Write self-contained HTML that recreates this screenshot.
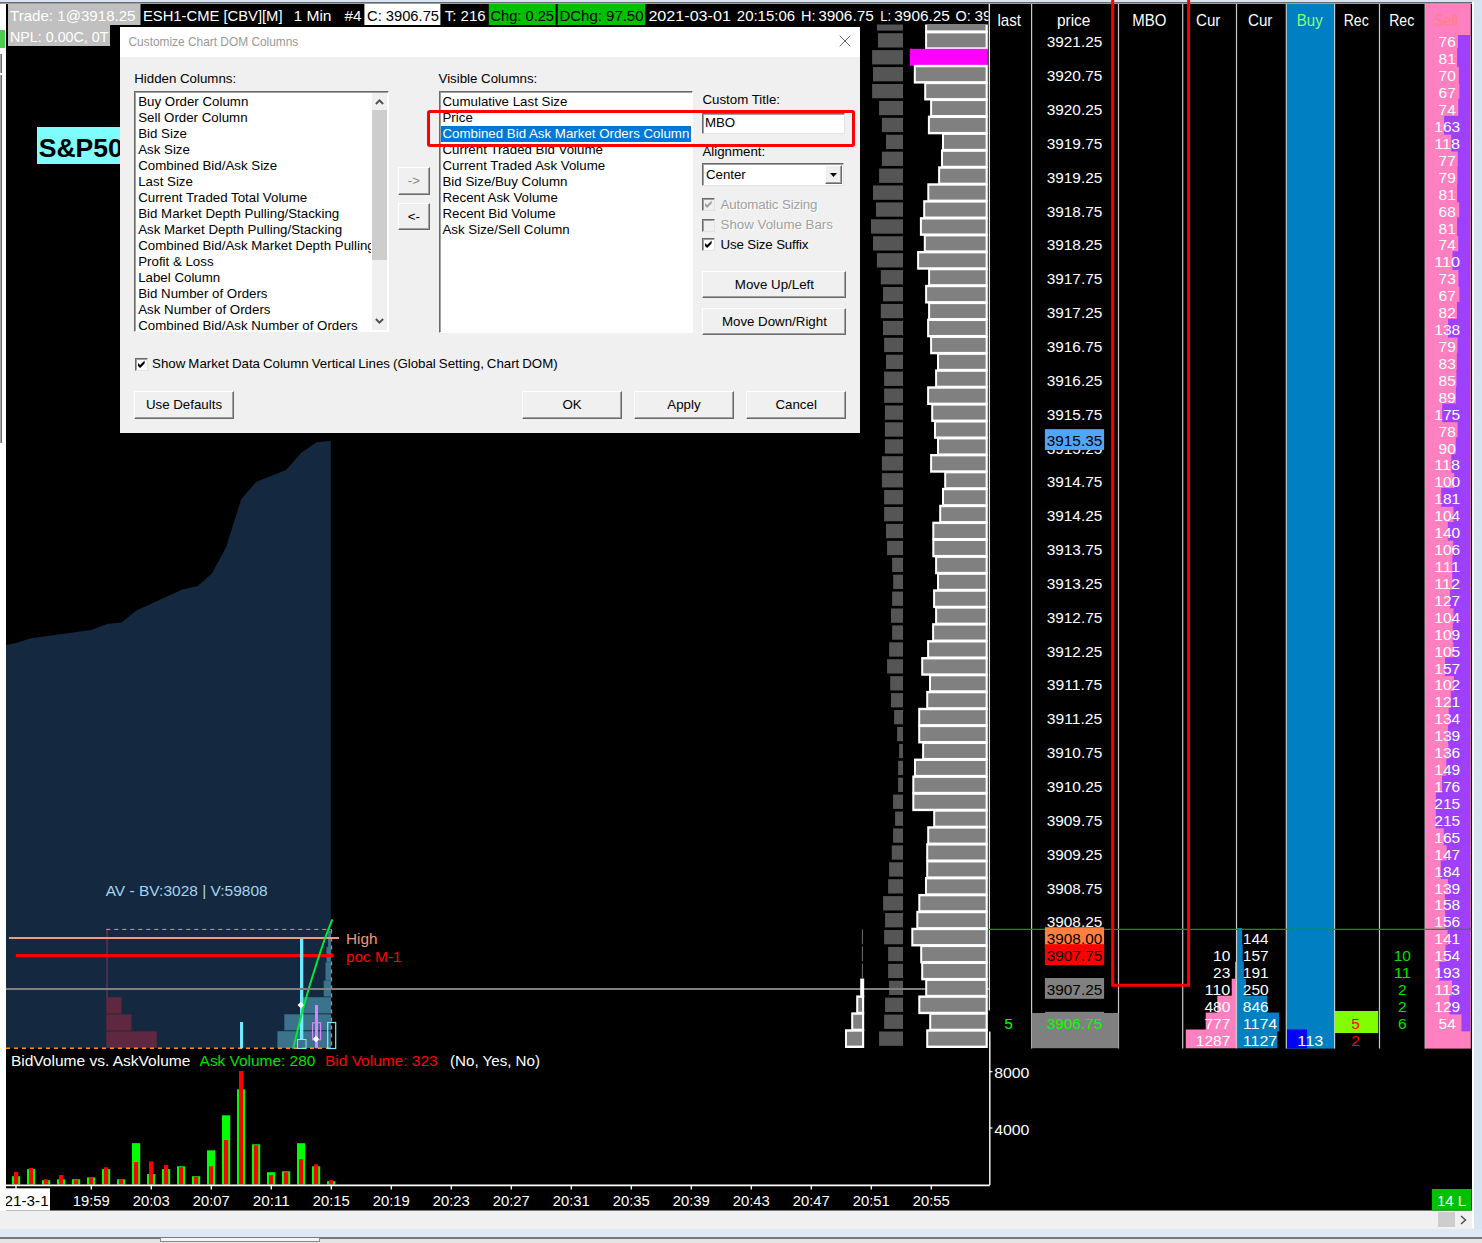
<!DOCTYPE html>
<html><head><meta charset="utf-8"><title>Customize Chart DOM Columns</title><style>
html,body{margin:0;padding:0;}
body{width:1482px;height:1243px;position:relative;overflow:hidden;background:#f0f0f0;font-family:"Liberation Sans",sans-serif;}
#chart{position:absolute;left:0;top:0;}
.abs{position:absolute;}
#dlg{position:absolute;left:120px;top:27px;width:740px;height:406px;background:#f0f0f0;font-size:13.3px;color:#000;overflow:hidden;}
#dlg .tb{position:absolute;left:0;top:0;width:740px;height:30px;background:#fff;}
#dlg .tt{position:absolute;left:8.5px;top:8px;font-size:11.9px;color:#999;white-space:nowrap;}
#dlg .lbl{position:absolute;white-space:nowrap;line-height:16px;}
.lb{position:absolute;background:#fff;border:1px solid #fff;border-top-color:#696969;border-left-color:#696969;box-shadow:inset 1px 1px 0 #a0a0a0;overflow:hidden;}
.it{height:16px;line-height:16px;white-space:nowrap;padding-left:2px;margin:0 1px;}
.it.sel{background:#0078d7;color:#fff;}
.btn{position:absolute;box-sizing:border-box;background:#f0f0f0;border:1px solid;border-color:#fff #696969 #696969 #fff;box-shadow:inset -1px -1px 0 #a0a0a0;text-align:center;white-space:nowrap;}
.cb{position:absolute;width:11px;height:11px;background:#fff;border:1px solid #696969;border-right-color:#e3e3e3;border-bottom-color:#e3e3e3;box-shadow:inset 1px 1px 0 #a0a0a0;}
</style></head><body>
<svg id="chart" width="1482" height="1243" viewBox="0 0 1482 1243" font-family="Liberation Sans, sans-serif"><defs>
<clipPath id="cpA"><rect x="840" y="24.5" width="150" height="1023.5"/></clipPath>
<clipPath id="cpB"><rect x="1425" y="35.1" width="46" height="997"/></clipPath>
<clipPath id="cpC"><rect x="640" y="4" width="348.5" height="22"/></clipPath>
<clipPath id="cpD"><rect x="6" y="1189" width="44.5" height="22"/></clipPath>
</defs>
<rect x="6.00" y="4.00" width="1466.00" height="1206.50" fill="#000" />
<polygon fill="#142840" points="6,645 15.2,643.3 31,638.3 91,629.9 107,624.1 121.5,622.4 136.6,610.6 182.2,589.4 197.4,586.3 211.9,573.5 226,547.5 241.2,499.3 256.4,481.7 286.1,469.9 301.3,452.7 316.5,442.3 330.8,440.9 330.8,1048.3 6,1048.3"/>
<text x="105.70" y="896.00" fill="#a5d4ee" font-size="15.2" text-anchor="start" textLength="162.0" lengthAdjust="spacingAndGlyphs" >AV - BV:3028 | V:59808</text>
<rect x="106.30" y="929.00" width="1.60" height="69.00" fill="#5a3050" />
<rect x="106.30" y="997.30" width="15.20" height="16.30" fill="#602840" />
<rect x="106.30" y="1014.40" width="25.20" height="16.20" fill="#602840" />
<rect x="106.30" y="1031.40" width="50.40" height="16.60" fill="#602840" />
<rect x="328.10" y="931.00" width="2.90" height="16.00" fill="#3b728c" />
<rect x="326.50" y="947.00" width="4.50" height="15.40" fill="#3b728c" />
<rect x="325.50" y="962.40" width="5.50" height="18.10" fill="#3b728c" />
<rect x="323.70" y="980.50" width="7.30" height="16.00" fill="#3b728c" />
<rect x="302.00" y="997.20" width="29.00" height="16.20" fill="#3b728c" />
<rect x="284.30" y="1014.30" width="46.70" height="16.00" fill="#3b728c" />
<rect x="277.40" y="1031.20" width="53.60" height="16.80" fill="#3b728c" />
<line x1="106.30" y1="929.40" x2="331.60" y2="929.40" stroke="#f0a040" stroke-width="1" stroke-dasharray="4 4"/>
<line x1="331.60" y1="929.40" x2="331.60" y2="1048.30" stroke="#ff9020" stroke-width="1.1" stroke-dasharray="4 4"/>
<line x1="6.00" y1="1048.30" x2="331.60" y2="1048.30" stroke="#ff9020" stroke-width="1.4" stroke-dasharray="4 4"/>
<line x1="9.00" y1="938.00" x2="339.00" y2="938.00" stroke="#f09a78" stroke-width="2" />
<line x1="15.80" y1="955.70" x2="333.60" y2="955.70" stroke="#ff0000" stroke-width="3.2" />
<rect x="300.00" y="938.60" width="3.30" height="100.50" fill="#70e8ff" />
<rect x="297.5" y="1039.5" width="8.5" height="9" fill="none" stroke="#80f0ff" stroke-width="1"/>
<rect x="240.00" y="1022.00" width="3.10" height="26.30" fill="#70e8ff" />
<rect x="315.00" y="1005.00" width="3.00" height="43.30" fill="#d884fa" />
<rect x="312.6" y="1022.8" width="8" height="17" fill="none" stroke="#d884fa" stroke-width="1.2"/>
<rect x="327.7" y="1022.5" width="8" height="26" fill="none" stroke="#80f0ff" stroke-width="1.2"/>
<polyline fill="none" stroke="#00e838" stroke-width="2" points="332.3,919.3 325.3,937.3 317.5,960.5 309.8,985 302.1,1012 293.1,1048.7"/>
<polygon fill="#fff" points="297.6,1005 300.8,1001.8 304.0,1005 300.8,1008.2"/>
<polygon fill="#fff" points="312.8,1039 316,1035.8 319.2,1039 316,1042.2"/>
<text x="346.00" y="944.00" fill="#f09a78" font-size="15.2" text-anchor="start" textLength="31.5" lengthAdjust="spacingAndGlyphs" >High</text>
<rect x="344.00" y="947.00" width="62.00" height="19.00" fill="#000" />
<text x="346.00" y="961.50" fill="#ff0000" font-size="15.2" text-anchor="start" textLength="55.3" lengthAdjust="spacingAndGlyphs" >poc M-1</text>
<g clip-path="url(#cpA)">
<rect x="876.90" y="16.28" width="26.10" height="14.32" fill="#555555" />
<rect x="878.00" y="33.20" width="25.00" height="14.32" fill="#555555" />
<rect x="872.10" y="50.12" width="30.90" height="14.32" fill="#555555" />
<rect x="873.00" y="67.04" width="30.00" height="14.32" fill="#555555" />
<rect x="872.10" y="83.96" width="30.90" height="14.32" fill="#555555" />
<rect x="879.10" y="100.88" width="23.90" height="14.32" fill="#555555" />
<rect x="881.90" y="117.80" width="21.10" height="14.32" fill="#555555" />
<rect x="886.00" y="134.72" width="17.00" height="14.32" fill="#555555" />
<rect x="881.90" y="151.64" width="21.10" height="14.32" fill="#555555" />
<rect x="879.10" y="168.56" width="23.90" height="14.32" fill="#555555" />
<rect x="873.00" y="185.48" width="30.00" height="14.32" fill="#555555" />
<rect x="876.00" y="202.40" width="27.00" height="14.32" fill="#555555" />
<rect x="871.00" y="219.32" width="32.00" height="14.32" fill="#555555" />
<rect x="873.00" y="236.24" width="30.00" height="14.32" fill="#555555" />
<rect x="876.90" y="253.16" width="26.10" height="14.32" fill="#555555" />
<rect x="880.80" y="270.08" width="22.20" height="14.32" fill="#555555" />
<rect x="883.00" y="287.00" width="20.00" height="14.32" fill="#555555" />
<rect x="880.80" y="303.92" width="22.20" height="14.32" fill="#555555" />
<rect x="883.00" y="320.84" width="20.00" height="14.32" fill="#555555" />
<rect x="884.10" y="337.76" width="18.90" height="14.32" fill="#555555" />
<rect x="886.00" y="354.68" width="17.00" height="14.32" fill="#555555" />
<rect x="884.10" y="371.60" width="18.90" height="14.32" fill="#555555" />
<rect x="884.10" y="388.52" width="18.90" height="14.32" fill="#555555" />
<rect x="884.90" y="405.44" width="18.10" height="14.32" fill="#555555" />
<rect x="884.90" y="422.36" width="18.10" height="14.32" fill="#555555" />
<rect x="884.90" y="439.28" width="18.10" height="14.32" fill="#555555" />
<rect x="881.90" y="456.20" width="21.10" height="14.32" fill="#555555" />
<rect x="881.90" y="473.12" width="21.10" height="14.32" fill="#555555" />
<rect x="884.10" y="490.04" width="18.90" height="14.32" fill="#555555" />
<rect x="884.10" y="506.96" width="18.90" height="14.32" fill="#555555" />
<rect x="886.00" y="523.88" width="17.00" height="14.32" fill="#555555" />
<rect x="887.10" y="540.80" width="15.90" height="14.32" fill="#555555" />
<rect x="892.10" y="557.72" width="10.90" height="14.32" fill="#555555" />
<rect x="893.20" y="574.64" width="9.80" height="14.32" fill="#555555" />
<rect x="892.10" y="591.56" width="10.90" height="14.32" fill="#555555" />
<rect x="891.00" y="608.48" width="12.00" height="14.32" fill="#555555" />
<rect x="892.10" y="625.40" width="10.90" height="14.32" fill="#555555" />
<rect x="889.10" y="642.32" width="13.90" height="14.32" fill="#555555" />
<rect x="887.10" y="659.24" width="15.90" height="14.32" fill="#555555" />
<rect x="890.20" y="676.16" width="12.80" height="14.32" fill="#555555" />
<rect x="891.00" y="693.08" width="12.00" height="14.32" fill="#555555" />
<rect x="894.10" y="710.00" width="8.90" height="14.32" fill="#555555" />
<rect x="897.10" y="726.92" width="5.90" height="14.32" fill="#555555" />
<rect x="899.10" y="743.84" width="3.90" height="14.32" fill="#555555" />
<rect x="898.10" y="760.76" width="4.90" height="14.32" fill="#555555" />
<rect x="898.10" y="777.68" width="4.90" height="14.32" fill="#555555" />
<rect x="893.10" y="794.60" width="9.90" height="14.32" fill="#555555" />
<rect x="895.10" y="811.52" width="7.90" height="14.32" fill="#555555" />
<rect x="893.10" y="828.44" width="9.90" height="14.32" fill="#555555" />
<rect x="891.80" y="845.36" width="11.20" height="14.32" fill="#555555" />
<rect x="889.10" y="862.28" width="13.90" height="14.32" fill="#555555" />
<rect x="888.10" y="879.20" width="14.90" height="14.32" fill="#555555" />
<rect x="883.10" y="896.12" width="19.90" height="14.32" fill="#555555" />
<rect x="885.10" y="913.04" width="17.90" height="14.32" fill="#555555" />
<rect x="884.10" y="929.96" width="18.90" height="14.32" fill="#555555" />
<rect x="888.10" y="946.88" width="14.90" height="14.32" fill="#555555" />
<rect x="888.10" y="963.80" width="14.90" height="14.32" fill="#555555" />
<rect x="889.10" y="980.72" width="13.90" height="14.32" fill="#555555" />
<rect x="885.10" y="997.64" width="17.90" height="14.32" fill="#555555" />
<rect x="884.10" y="1014.56" width="18.90" height="14.32" fill="#555555" />
<rect x="879.10" y="1031.48" width="23.90" height="14.32" fill="#555555" />
</g>
<line x1="6.00" y1="989.00" x2="989.00" y2="989.00" stroke="#808080" stroke-width="2" />
<g clip-path="url(#cpA)">
<rect x="925.10" y="14.08" width="62.70" height="18.72" fill="#fff" />
<rect x="927.10" y="16.48" width="58.50" height="13.92" fill="#808080" />
<rect x="925.10" y="31.00" width="62.70" height="18.72" fill="#fff" />
<rect x="927.10" y="33.40" width="58.50" height="13.92" fill="#808080" />
<rect x="909.90" y="48.82" width="77.90" height="16.92" fill="#ff00ff" />
<rect x="913.80" y="64.84" width="74.00" height="18.72" fill="#fff" />
<rect x="915.80" y="67.24" width="69.80" height="13.92" fill="#808080" />
<rect x="924.20" y="81.76" width="63.60" height="18.72" fill="#fff" />
<rect x="926.20" y="84.16" width="59.40" height="13.92" fill="#808080" />
<rect x="930.10" y="98.68" width="57.70" height="18.72" fill="#fff" />
<rect x="932.10" y="101.08" width="53.50" height="13.92" fill="#808080" />
<rect x="927.90" y="115.60" width="59.90" height="18.72" fill="#fff" />
<rect x="929.90" y="118.00" width="55.70" height="13.92" fill="#808080" />
<rect x="942.00" y="132.52" width="45.80" height="18.72" fill="#fff" />
<rect x="944.00" y="134.92" width="41.60" height="13.92" fill="#808080" />
<rect x="941.00" y="149.44" width="46.80" height="18.72" fill="#fff" />
<rect x="943.00" y="151.84" width="42.60" height="13.92" fill="#808080" />
<rect x="938.10" y="166.36" width="49.70" height="18.72" fill="#fff" />
<rect x="940.10" y="168.76" width="45.50" height="13.92" fill="#808080" />
<rect x="927.30" y="183.28" width="60.50" height="18.72" fill="#fff" />
<rect x="929.30" y="185.68" width="56.30" height="13.92" fill="#808080" />
<rect x="923.20" y="200.20" width="64.60" height="18.72" fill="#fff" />
<rect x="925.20" y="202.60" width="60.40" height="13.92" fill="#808080" />
<rect x="919.90" y="217.12" width="67.90" height="18.72" fill="#fff" />
<rect x="921.90" y="219.52" width="63.70" height="13.92" fill="#808080" />
<rect x="923.80" y="234.04" width="64.00" height="18.72" fill="#fff" />
<rect x="925.80" y="236.44" width="59.80" height="13.92" fill="#808080" />
<rect x="917.10" y="250.96" width="70.70" height="18.72" fill="#fff" />
<rect x="919.10" y="253.36" width="66.50" height="13.92" fill="#808080" />
<rect x="928.10" y="267.88" width="59.70" height="18.72" fill="#fff" />
<rect x="930.10" y="270.28" width="55.50" height="13.92" fill="#808080" />
<rect x="925.10" y="284.80" width="62.70" height="18.72" fill="#fff" />
<rect x="927.10" y="287.20" width="58.50" height="13.92" fill="#808080" />
<rect x="928.10" y="301.72" width="59.70" height="18.72" fill="#fff" />
<rect x="930.10" y="304.12" width="55.50" height="13.92" fill="#808080" />
<rect x="927.10" y="318.64" width="60.70" height="18.72" fill="#fff" />
<rect x="929.10" y="321.04" width="56.50" height="13.92" fill="#808080" />
<rect x="930.10" y="335.56" width="57.70" height="18.72" fill="#fff" />
<rect x="932.10" y="337.96" width="53.50" height="13.92" fill="#808080" />
<rect x="937.00" y="352.48" width="50.80" height="18.72" fill="#fff" />
<rect x="939.00" y="354.88" width="46.60" height="13.92" fill="#808080" />
<rect x="935.10" y="369.40" width="52.70" height="18.72" fill="#fff" />
<rect x="937.10" y="371.80" width="48.50" height="13.92" fill="#808080" />
<rect x="927.10" y="386.32" width="60.70" height="18.72" fill="#fff" />
<rect x="929.10" y="388.72" width="56.50" height="13.92" fill="#808080" />
<rect x="931.20" y="403.24" width="56.60" height="18.72" fill="#fff" />
<rect x="933.20" y="405.64" width="52.40" height="13.92" fill="#808080" />
<rect x="934.00" y="420.16" width="53.80" height="18.72" fill="#fff" />
<rect x="936.00" y="422.56" width="49.60" height="13.92" fill="#808080" />
<rect x="937.00" y="437.08" width="50.80" height="18.72" fill="#fff" />
<rect x="939.00" y="439.48" width="46.60" height="13.92" fill="#808080" />
<rect x="930.10" y="454.00" width="57.70" height="18.72" fill="#fff" />
<rect x="932.10" y="456.40" width="53.50" height="13.92" fill="#808080" />
<rect x="944.20" y="470.92" width="43.60" height="18.72" fill="#fff" />
<rect x="946.20" y="473.32" width="39.40" height="13.92" fill="#808080" />
<rect x="942.00" y="487.84" width="45.80" height="18.72" fill="#fff" />
<rect x="944.00" y="490.24" width="41.60" height="13.92" fill="#808080" />
<rect x="939.20" y="504.76" width="48.60" height="18.72" fill="#fff" />
<rect x="941.20" y="507.16" width="44.40" height="13.92" fill="#808080" />
<rect x="932.30" y="521.68" width="55.50" height="18.72" fill="#fff" />
<rect x="934.30" y="524.08" width="51.30" height="13.92" fill="#808080" />
<rect x="932.30" y="538.60" width="55.50" height="18.72" fill="#fff" />
<rect x="934.30" y="541.00" width="51.30" height="13.92" fill="#808080" />
<rect x="935.10" y="555.52" width="52.70" height="18.72" fill="#fff" />
<rect x="937.10" y="557.92" width="48.50" height="13.92" fill="#808080" />
<rect x="937.00" y="572.44" width="50.80" height="18.72" fill="#fff" />
<rect x="939.00" y="574.84" width="46.60" height="13.92" fill="#808080" />
<rect x="933.10" y="589.36" width="54.70" height="18.72" fill="#fff" />
<rect x="935.10" y="591.76" width="50.50" height="13.92" fill="#808080" />
<rect x="935.10" y="606.28" width="52.70" height="18.72" fill="#fff" />
<rect x="937.10" y="608.68" width="48.50" height="13.92" fill="#808080" />
<rect x="932.10" y="623.20" width="55.70" height="18.72" fill="#fff" />
<rect x="934.10" y="625.60" width="51.50" height="13.92" fill="#808080" />
<rect x="927.10" y="640.12" width="60.70" height="18.72" fill="#fff" />
<rect x="929.10" y="642.52" width="56.50" height="13.92" fill="#808080" />
<rect x="921.20" y="657.04" width="66.60" height="18.72" fill="#fff" />
<rect x="923.20" y="659.44" width="62.40" height="13.92" fill="#808080" />
<rect x="929.00" y="673.96" width="58.80" height="18.72" fill="#fff" />
<rect x="931.00" y="676.36" width="54.60" height="13.92" fill="#808080" />
<rect x="926.20" y="690.88" width="61.60" height="18.72" fill="#fff" />
<rect x="928.20" y="693.28" width="57.40" height="13.92" fill="#808080" />
<rect x="918.20" y="707.80" width="69.60" height="18.72" fill="#fff" />
<rect x="920.20" y="710.20" width="65.40" height="13.92" fill="#808080" />
<rect x="918.20" y="724.72" width="69.60" height="18.72" fill="#fff" />
<rect x="920.20" y="727.12" width="65.40" height="13.92" fill="#808080" />
<rect x="922.10" y="741.64" width="65.70" height="18.72" fill="#fff" />
<rect x="924.10" y="744.04" width="61.50" height="13.92" fill="#808080" />
<rect x="914.00" y="758.56" width="73.80" height="18.72" fill="#fff" />
<rect x="916.00" y="760.96" width="69.60" height="13.92" fill="#808080" />
<rect x="912.30" y="775.48" width="75.50" height="18.72" fill="#fff" />
<rect x="914.30" y="777.88" width="71.30" height="13.92" fill="#808080" />
<rect x="912.30" y="792.40" width="75.50" height="18.72" fill="#fff" />
<rect x="914.30" y="794.80" width="71.30" height="13.92" fill="#808080" />
<rect x="933.20" y="809.32" width="54.60" height="18.72" fill="#fff" />
<rect x="935.20" y="811.72" width="50.40" height="13.92" fill="#808080" />
<rect x="927.20" y="826.24" width="60.60" height="18.72" fill="#fff" />
<rect x="929.20" y="828.64" width="56.40" height="13.92" fill="#808080" />
<rect x="926.20" y="843.16" width="61.60" height="18.72" fill="#fff" />
<rect x="928.20" y="845.56" width="57.40" height="13.92" fill="#808080" />
<rect x="926.20" y="860.08" width="61.60" height="18.72" fill="#fff" />
<rect x="928.20" y="862.48" width="57.40" height="13.92" fill="#808080" />
<rect x="925.00" y="877.00" width="62.80" height="18.72" fill="#fff" />
<rect x="927.00" y="879.40" width="58.60" height="13.92" fill="#808080" />
<rect x="918.30" y="893.92" width="69.50" height="18.72" fill="#fff" />
<rect x="920.30" y="896.32" width="65.30" height="13.92" fill="#808080" />
<rect x="916.30" y="910.84" width="71.50" height="18.72" fill="#fff" />
<rect x="918.30" y="913.24" width="67.30" height="13.92" fill="#808080" />
<rect x="911.30" y="927.76" width="76.50" height="18.72" fill="#fff" />
<rect x="913.30" y="930.16" width="72.30" height="13.92" fill="#808080" />
<rect x="920.20" y="944.68" width="67.60" height="18.72" fill="#fff" />
<rect x="922.20" y="947.08" width="63.40" height="13.92" fill="#808080" />
<rect x="921.20" y="961.60" width="66.60" height="18.72" fill="#fff" />
<rect x="923.20" y="964.00" width="62.40" height="13.92" fill="#808080" />
<rect x="925.20" y="978.52" width="62.60" height="18.72" fill="#fff" />
<rect x="927.20" y="980.92" width="58.40" height="13.92" fill="#808080" />
<rect x="918.30" y="995.44" width="69.50" height="18.72" fill="#fff" />
<rect x="920.30" y="997.84" width="65.30" height="13.92" fill="#808080" />
<rect x="929.20" y="1012.36" width="58.60" height="18.72" fill="#fff" />
<rect x="931.20" y="1014.76" width="54.40" height="13.92" fill="#808080" />
<rect x="926.20" y="1029.28" width="61.60" height="18.72" fill="#fff" />
<rect x="928.20" y="1031.68" width="57.40" height="13.92" fill="#808080" />
<rect x="860.20" y="978.52" width="4.00" height="18.72" fill="#fff" />
<rect x="856.20" y="995.44" width="8.00" height="18.72" fill="#fff" />
<rect x="858.20" y="997.84" width="3.80" height="13.92" fill="#808080" />
<rect x="851.20" y="1012.36" width="13.00" height="18.72" fill="#fff" />
<rect x="853.20" y="1014.76" width="8.80" height="13.92" fill="#808080" />
<rect x="845.00" y="1029.28" width="19.20" height="18.72" fill="#fff" />
<rect x="847.00" y="1031.68" width="15.00" height="13.92" fill="#808080" />
</g>
<line x1="862.40" y1="929.40" x2="862.40" y2="980.00" stroke="#707070" stroke-width="1" stroke-dasharray="15 2"/>
<line x1="989.30" y1="4.00" x2="989.30" y2="1010.40" stroke="#fff" stroke-width="1.2" />
<line x1="989.80" y1="1031.60" x2="989.80" y2="1185.00" stroke="#fff" stroke-width="1.4" />
<rect x="1286.50" y="4.00" width="48.00" height="1044.60" fill="#007fc3" />
<rect x="1425.30" y="4.00" width="45.50" height="1044.60" fill="#ff80c0" />
<g clip-path="url(#cpB)">
<rect x="1457.92" y="31.20" width="12.08" height="18.80" fill="#a040ff" />
<rect x="1457.12" y="48.12" width="12.88" height="18.80" fill="#a040ff" />
<rect x="1458.87" y="65.04" width="11.13" height="18.80" fill="#a040ff" />
<rect x="1459.35" y="81.96" width="10.65" height="18.80" fill="#a040ff" />
<rect x="1458.23" y="98.88" width="11.77" height="18.80" fill="#a040ff" />
<rect x="1444.08" y="115.80" width="25.92" height="18.80" fill="#a040ff" />
<rect x="1451.24" y="132.72" width="18.76" height="18.80" fill="#a040ff" />
<rect x="1457.76" y="149.64" width="12.24" height="18.80" fill="#a040ff" />
<rect x="1457.44" y="166.56" width="12.56" height="18.80" fill="#a040ff" />
<rect x="1457.12" y="183.48" width="12.88" height="18.80" fill="#a040ff" />
<rect x="1459.19" y="200.40" width="10.81" height="18.80" fill="#a040ff" />
<rect x="1457.12" y="217.32" width="12.88" height="18.80" fill="#a040ff" />
<rect x="1458.23" y="234.24" width="11.77" height="18.80" fill="#a040ff" />
<rect x="1452.51" y="251.16" width="17.49" height="18.80" fill="#a040ff" />
<rect x="1458.39" y="268.08" width="11.61" height="18.80" fill="#a040ff" />
<rect x="1459.35" y="285.00" width="10.65" height="18.80" fill="#a040ff" />
<rect x="1456.96" y="301.92" width="13.04" height="18.80" fill="#a040ff" />
<rect x="1448.06" y="318.84" width="21.94" height="18.80" fill="#a040ff" />
<rect x="1457.44" y="335.76" width="12.56" height="18.80" fill="#a040ff" />
<rect x="1456.80" y="352.68" width="13.20" height="18.80" fill="#a040ff" />
<rect x="1456.48" y="369.60" width="13.52" height="18.80" fill="#a040ff" />
<rect x="1455.85" y="386.52" width="14.15" height="18.80" fill="#a040ff" />
<rect x="1442.17" y="403.44" width="27.82" height="18.80" fill="#a040ff" />
<rect x="1457.60" y="420.36" width="12.40" height="18.80" fill="#a040ff" />
<rect x="1455.69" y="437.28" width="14.31" height="18.80" fill="#a040ff" />
<rect x="1451.24" y="454.20" width="18.76" height="18.80" fill="#a040ff" />
<rect x="1454.10" y="471.12" width="15.90" height="18.80" fill="#a040ff" />
<rect x="1441.22" y="488.04" width="28.78" height="18.80" fill="#a040ff" />
<rect x="1453.46" y="504.96" width="16.54" height="18.80" fill="#a040ff" />
<rect x="1447.74" y="521.88" width="22.26" height="18.80" fill="#a040ff" />
<rect x="1453.15" y="538.80" width="16.85" height="18.80" fill="#a040ff" />
<rect x="1452.35" y="555.72" width="17.65" height="18.80" fill="#a040ff" />
<rect x="1452.19" y="572.64" width="17.81" height="18.80" fill="#a040ff" />
<rect x="1449.81" y="589.56" width="20.19" height="18.80" fill="#a040ff" />
<rect x="1453.46" y="606.48" width="16.54" height="18.80" fill="#a040ff" />
<rect x="1452.67" y="623.40" width="17.33" height="18.80" fill="#a040ff" />
<rect x="1453.31" y="640.32" width="16.70" height="18.80" fill="#a040ff" />
<rect x="1445.04" y="657.24" width="24.96" height="18.80" fill="#a040ff" />
<rect x="1453.78" y="674.16" width="16.22" height="18.80" fill="#a040ff" />
<rect x="1450.76" y="691.08" width="19.24" height="18.80" fill="#a040ff" />
<rect x="1448.69" y="708.00" width="21.31" height="18.80" fill="#a040ff" />
<rect x="1447.90" y="724.92" width="22.10" height="18.80" fill="#a040ff" />
<rect x="1448.38" y="741.84" width="21.62" height="18.80" fill="#a040ff" />
<rect x="1446.31" y="758.76" width="23.69" height="18.80" fill="#a040ff" />
<rect x="1442.02" y="775.68" width="27.98" height="18.80" fill="#a040ff" />
<rect x="1435.82" y="792.60" width="34.19" height="18.80" fill="#a040ff" />
<rect x="1435.82" y="809.52" width="34.19" height="18.80" fill="#a040ff" />
<rect x="1443.77" y="826.44" width="26.23" height="18.80" fill="#a040ff" />
<rect x="1446.63" y="843.36" width="23.37" height="18.80" fill="#a040ff" />
<rect x="1440.74" y="860.28" width="29.26" height="18.80" fill="#a040ff" />
<rect x="1447.90" y="877.20" width="22.10" height="18.80" fill="#a040ff" />
<rect x="1444.88" y="894.12" width="25.12" height="18.80" fill="#a040ff" />
<rect x="1445.20" y="911.04" width="24.80" height="18.80" fill="#a040ff" />
<rect x="1447.58" y="927.96" width="22.42" height="18.80" fill="#a040ff" />
<rect x="1445.51" y="944.88" width="24.49" height="18.80" fill="#a040ff" />
<rect x="1439.31" y="961.80" width="30.69" height="18.80" fill="#a040ff" />
<rect x="1452.03" y="978.72" width="17.97" height="18.80" fill="#a040ff" />
<rect x="1449.49" y="995.64" width="20.51" height="18.80" fill="#a040ff" />
<rect x="1461.41" y="1012.56" width="8.59" height="18.80" fill="#a040ff" />
</g>
<rect x="1235.10" y="961.80" width="0.90" height="18.80" fill="#ff80c0" />
<rect x="1231.71" y="978.72" width="4.29" height="18.80" fill="#ff80c0" />
<rect x="1217.28" y="995.64" width="18.72" height="18.80" fill="#ff80c0" />
<rect x="1205.70" y="1012.56" width="30.30" height="18.80" fill="#ff80c0" />
<rect x="1185.81" y="1029.48" width="50.19" height="18.80" fill="#ff80c0" />
<rect x="1237.00" y="927.96" width="5.16" height="18.80" fill="#007fc3" />
<rect x="1237.00" y="944.88" width="5.62" height="18.80" fill="#007fc3" />
<rect x="1237.00" y="961.80" width="6.84" height="18.80" fill="#007fc3" />
<rect x="1237.00" y="978.72" width="8.95" height="18.80" fill="#007fc3" />
<rect x="1237.00" y="995.64" width="30.29" height="18.80" fill="#007fc3" />
<rect x="1237.00" y="1012.56" width="42.03" height="18.80" fill="#007fc3" />
<rect x="1237.00" y="1029.48" width="40.35" height="18.80" fill="#007fc3" />
<rect x="1287.00" y="1029.48" width="20.00" height="18.80" fill="#0000ff" />
<line x1="1031.60" y1="4.00" x2="1031.60" y2="1048.60" stroke="#c8c8c8" stroke-width="1.2" />
<line x1="1118.50" y1="4.00" x2="1118.50" y2="1048.60" stroke="#c8c8c8" stroke-width="1.2" />
<line x1="1182.70" y1="4.00" x2="1182.70" y2="1048.60" stroke="#c8c8c8" stroke-width="1.2" />
<line x1="1236.50" y1="4.00" x2="1236.50" y2="1048.60" stroke="#c8c8c8" stroke-width="1.2" />
<line x1="1286.30" y1="4.00" x2="1286.30" y2="1048.60" stroke="#c8c8c8" stroke-width="1.2" />
<line x1="1334.60" y1="4.00" x2="1334.60" y2="1048.60" stroke="#c8c8c8" stroke-width="1.2" />
<line x1="1379.50" y1="4.00" x2="1379.50" y2="1048.60" stroke="#c8c8c8" stroke-width="1.2" />
<line x1="1425.20" y1="4.00" x2="1425.20" y2="1048.60" stroke="#c8c8c8" stroke-width="1.2" />
<line x1="989.00" y1="929.40" x2="1471.50" y2="929.40" stroke="#00a000" stroke-width="1.2" />
<text x="1009.20" y="26.00" fill="#fff" font-size="16.2" text-anchor="middle" textLength="23.6" lengthAdjust="spacingAndGlyphs" >last</text>
<text x="1073.70" y="26.00" fill="#fff" font-size="16.2" text-anchor="middle" textLength="33.4" lengthAdjust="spacingAndGlyphs" >price</text>
<text x="1149.40" y="26.00" fill="#fff" font-size="16.2" text-anchor="middle" textLength="34.1" lengthAdjust="spacingAndGlyphs" >MBO</text>
<text x="1208.20" y="26.00" fill="#fff" font-size="16.2" text-anchor="middle" textLength="24.5" lengthAdjust="spacingAndGlyphs" >Cur</text>
<text x="1260.20" y="26.00" fill="#fff" font-size="16.2" text-anchor="middle" textLength="24.5" lengthAdjust="spacingAndGlyphs" >Cur</text>
<text x="1309.70" y="26.00" fill="#80ff80" font-size="16.2" text-anchor="middle" textLength="26.0" lengthAdjust="spacingAndGlyphs" >Buy</text>
<text x="1356.20" y="26.00" fill="#fff" font-size="16.2" text-anchor="middle" textLength="25.0" lengthAdjust="spacingAndGlyphs" >Rec</text>
<text x="1401.70" y="26.00" fill="#fff" font-size="16.2" text-anchor="middle" textLength="25.0" lengthAdjust="spacingAndGlyphs" >Rec</text>
<text x="1445.90" y="26.00" fill="#ff8080" font-size="16.2" text-anchor="middle" textLength="24.5" lengthAdjust="spacingAndGlyphs" >Sell</text>
<text x="1074.50" y="47.40" fill="#fff" font-size="15.4" text-anchor="middle" textLength="55.6" lengthAdjust="spacingAndGlyphs" >3921.25</text>
<text x="1074.50" y="81.25" fill="#fff" font-size="15.4" text-anchor="middle" textLength="55.6" lengthAdjust="spacingAndGlyphs" >3920.75</text>
<text x="1074.50" y="115.09" fill="#fff" font-size="15.4" text-anchor="middle" textLength="55.6" lengthAdjust="spacingAndGlyphs" >3920.25</text>
<text x="1074.50" y="148.94" fill="#fff" font-size="15.4" text-anchor="middle" textLength="55.6" lengthAdjust="spacingAndGlyphs" >3919.75</text>
<text x="1074.50" y="182.78" fill="#fff" font-size="15.4" text-anchor="middle" textLength="55.6" lengthAdjust="spacingAndGlyphs" >3919.25</text>
<text x="1074.50" y="216.63" fill="#fff" font-size="15.4" text-anchor="middle" textLength="55.6" lengthAdjust="spacingAndGlyphs" >3918.75</text>
<text x="1074.50" y="250.48" fill="#fff" font-size="15.4" text-anchor="middle" textLength="55.6" lengthAdjust="spacingAndGlyphs" >3918.25</text>
<text x="1074.50" y="284.32" fill="#fff" font-size="15.4" text-anchor="middle" textLength="55.6" lengthAdjust="spacingAndGlyphs" >3917.75</text>
<text x="1074.50" y="318.17" fill="#fff" font-size="15.4" text-anchor="middle" textLength="55.6" lengthAdjust="spacingAndGlyphs" >3917.25</text>
<text x="1074.50" y="352.01" fill="#fff" font-size="15.4" text-anchor="middle" textLength="55.6" lengthAdjust="spacingAndGlyphs" >3916.75</text>
<text x="1074.50" y="385.86" fill="#fff" font-size="15.4" text-anchor="middle" textLength="55.6" lengthAdjust="spacingAndGlyphs" >3916.25</text>
<text x="1074.50" y="419.71" fill="#fff" font-size="15.4" text-anchor="middle" textLength="55.6" lengthAdjust="spacingAndGlyphs" >3915.75</text>
<text x="1074.50" y="453.55" fill="#fff" font-size="15.4" text-anchor="middle" textLength="55.6" lengthAdjust="spacingAndGlyphs" >3915.25</text>
<text x="1074.50" y="487.40" fill="#fff" font-size="15.4" text-anchor="middle" textLength="55.6" lengthAdjust="spacingAndGlyphs" >3914.75</text>
<text x="1074.50" y="521.24" fill="#fff" font-size="15.4" text-anchor="middle" textLength="55.6" lengthAdjust="spacingAndGlyphs" >3914.25</text>
<text x="1074.50" y="555.09" fill="#fff" font-size="15.4" text-anchor="middle" textLength="55.6" lengthAdjust="spacingAndGlyphs" >3913.75</text>
<text x="1074.50" y="588.94" fill="#fff" font-size="15.4" text-anchor="middle" textLength="55.6" lengthAdjust="spacingAndGlyphs" >3913.25</text>
<text x="1074.50" y="622.78" fill="#fff" font-size="15.4" text-anchor="middle" textLength="55.6" lengthAdjust="spacingAndGlyphs" >3912.75</text>
<text x="1074.50" y="656.63" fill="#fff" font-size="15.4" text-anchor="middle" textLength="55.6" lengthAdjust="spacingAndGlyphs" >3912.25</text>
<text x="1074.50" y="690.47" fill="#fff" font-size="15.4" text-anchor="middle" textLength="55.6" lengthAdjust="spacingAndGlyphs" >3911.75</text>
<text x="1074.50" y="724.32" fill="#fff" font-size="15.4" text-anchor="middle" textLength="55.6" lengthAdjust="spacingAndGlyphs" >3911.25</text>
<text x="1074.50" y="758.17" fill="#fff" font-size="15.4" text-anchor="middle" textLength="55.6" lengthAdjust="spacingAndGlyphs" >3910.75</text>
<text x="1074.50" y="792.01" fill="#fff" font-size="15.4" text-anchor="middle" textLength="55.6" lengthAdjust="spacingAndGlyphs" >3910.25</text>
<text x="1074.50" y="825.86" fill="#fff" font-size="15.4" text-anchor="middle" textLength="55.6" lengthAdjust="spacingAndGlyphs" >3909.75</text>
<text x="1074.50" y="859.70" fill="#fff" font-size="15.4" text-anchor="middle" textLength="55.6" lengthAdjust="spacingAndGlyphs" >3909.25</text>
<text x="1074.50" y="893.55" fill="#fff" font-size="15.4" text-anchor="middle" textLength="55.6" lengthAdjust="spacingAndGlyphs" >3908.75</text>
<text x="1074.50" y="927.40" fill="#fff" font-size="15.4" text-anchor="middle" textLength="55.6" lengthAdjust="spacingAndGlyphs" >3908.25</text>
<rect x="1044.90" y="429.14" width="59.20" height="20.80" fill="#50a5ff" />
<text x="1074.50" y="446.11" fill="#000" font-size="15.4" text-anchor="middle" textLength="55.6" lengthAdjust="spacingAndGlyphs" >3915.35</text>
<rect x="1044.90" y="927.26" width="59.20" height="20.80" fill="#ff8040" />
<text x="1074.50" y="944.32" fill="#000" font-size="15.4" text-anchor="middle" textLength="55.6" lengthAdjust="spacingAndGlyphs" >3908.00</text>
<rect x="1044.90" y="944.18" width="59.20" height="20.80" fill="#ff0000" />
<text x="1074.50" y="961.24" fill="#000" font-size="15.4" text-anchor="middle" textLength="55.6" lengthAdjust="spacingAndGlyphs" >3907.75</text>
<rect x="1044.90" y="978.02" width="59.20" height="20.80" fill="#808080" />
<text x="1074.50" y="995.09" fill="#000" font-size="15.4" text-anchor="middle" textLength="55.6" lengthAdjust="spacingAndGlyphs" >3907.25</text>
<rect x="1044.90" y="1011.80" width="59.20" height="3.00" fill="#808080" />
<rect x="1031.60" y="1013.00" width="86.90" height="35.20" fill="#808080" />
<text x="1074.50" y="1028.93" fill="#00ff00" font-size="15.4" text-anchor="middle" textLength="55.6" lengthAdjust="spacingAndGlyphs" >3906.75</text>
<text x="1008.50" y="1028.93" fill="#00ff00" font-size="15.4" text-anchor="middle" >5</text>
<text x="1447.20" y="47.40" fill="#fff" font-size="15.4" text-anchor="middle" textLength="17.2" lengthAdjust="spacingAndGlyphs" >76</text>
<text x="1447.20" y="64.32" fill="#fff" font-size="15.4" text-anchor="middle" textLength="17.2" lengthAdjust="spacingAndGlyphs" >81</text>
<text x="1447.20" y="81.25" fill="#fff" font-size="15.4" text-anchor="middle" textLength="17.2" lengthAdjust="spacingAndGlyphs" >70</text>
<text x="1447.20" y="98.17" fill="#fff" font-size="15.4" text-anchor="middle" textLength="17.2" lengthAdjust="spacingAndGlyphs" >67</text>
<text x="1447.20" y="115.09" fill="#fff" font-size="15.4" text-anchor="middle" textLength="17.2" lengthAdjust="spacingAndGlyphs" >74</text>
<text x="1447.20" y="132.01" fill="#fff" font-size="15.4" text-anchor="middle" textLength="25.9" lengthAdjust="spacingAndGlyphs" >163</text>
<text x="1447.20" y="148.94" fill="#fff" font-size="15.4" text-anchor="middle" textLength="25.9" lengthAdjust="spacingAndGlyphs" >118</text>
<text x="1447.20" y="165.86" fill="#fff" font-size="15.4" text-anchor="middle" textLength="17.2" lengthAdjust="spacingAndGlyphs" >77</text>
<text x="1447.20" y="182.78" fill="#fff" font-size="15.4" text-anchor="middle" textLength="17.2" lengthAdjust="spacingAndGlyphs" >79</text>
<text x="1447.20" y="199.71" fill="#fff" font-size="15.4" text-anchor="middle" textLength="17.2" lengthAdjust="spacingAndGlyphs" >81</text>
<text x="1447.20" y="216.63" fill="#fff" font-size="15.4" text-anchor="middle" textLength="17.2" lengthAdjust="spacingAndGlyphs" >68</text>
<text x="1447.20" y="233.55" fill="#fff" font-size="15.4" text-anchor="middle" textLength="17.2" lengthAdjust="spacingAndGlyphs" >81</text>
<text x="1447.20" y="250.48" fill="#fff" font-size="15.4" text-anchor="middle" textLength="17.2" lengthAdjust="spacingAndGlyphs" >74</text>
<text x="1447.20" y="267.40" fill="#fff" font-size="15.4" text-anchor="middle" textLength="25.9" lengthAdjust="spacingAndGlyphs" >110</text>
<text x="1447.20" y="284.32" fill="#fff" font-size="15.4" text-anchor="middle" textLength="17.2" lengthAdjust="spacingAndGlyphs" >73</text>
<text x="1447.20" y="301.24" fill="#fff" font-size="15.4" text-anchor="middle" textLength="17.2" lengthAdjust="spacingAndGlyphs" >67</text>
<text x="1447.20" y="318.17" fill="#fff" font-size="15.4" text-anchor="middle" textLength="17.2" lengthAdjust="spacingAndGlyphs" >82</text>
<text x="1447.20" y="335.09" fill="#fff" font-size="15.4" text-anchor="middle" textLength="25.9" lengthAdjust="spacingAndGlyphs" >138</text>
<text x="1447.20" y="352.01" fill="#fff" font-size="15.4" text-anchor="middle" textLength="17.2" lengthAdjust="spacingAndGlyphs" >79</text>
<text x="1447.20" y="368.94" fill="#fff" font-size="15.4" text-anchor="middle" textLength="17.2" lengthAdjust="spacingAndGlyphs" >83</text>
<text x="1447.20" y="385.86" fill="#fff" font-size="15.4" text-anchor="middle" textLength="17.2" lengthAdjust="spacingAndGlyphs" >85</text>
<text x="1447.20" y="402.78" fill="#fff" font-size="15.4" text-anchor="middle" textLength="17.2" lengthAdjust="spacingAndGlyphs" >89</text>
<text x="1447.20" y="419.71" fill="#fff" font-size="15.4" text-anchor="middle" textLength="25.9" lengthAdjust="spacingAndGlyphs" >175</text>
<text x="1447.20" y="436.63" fill="#fff" font-size="15.4" text-anchor="middle" textLength="17.2" lengthAdjust="spacingAndGlyphs" >78</text>
<text x="1447.20" y="453.55" fill="#fff" font-size="15.4" text-anchor="middle" textLength="17.2" lengthAdjust="spacingAndGlyphs" >90</text>
<text x="1447.20" y="470.47" fill="#fff" font-size="15.4" text-anchor="middle" textLength="25.9" lengthAdjust="spacingAndGlyphs" >118</text>
<text x="1447.20" y="487.40" fill="#fff" font-size="15.4" text-anchor="middle" textLength="25.9" lengthAdjust="spacingAndGlyphs" >100</text>
<text x="1447.20" y="504.32" fill="#fff" font-size="15.4" text-anchor="middle" textLength="25.9" lengthAdjust="spacingAndGlyphs" >181</text>
<text x="1447.20" y="521.24" fill="#fff" font-size="15.4" text-anchor="middle" textLength="25.9" lengthAdjust="spacingAndGlyphs" >104</text>
<text x="1447.20" y="538.17" fill="#fff" font-size="15.4" text-anchor="middle" textLength="25.9" lengthAdjust="spacingAndGlyphs" >140</text>
<text x="1447.20" y="555.09" fill="#fff" font-size="15.4" text-anchor="middle" textLength="25.9" lengthAdjust="spacingAndGlyphs" >106</text>
<text x="1447.20" y="572.01" fill="#fff" font-size="15.4" text-anchor="middle" textLength="25.9" lengthAdjust="spacingAndGlyphs" >111</text>
<text x="1447.20" y="588.94" fill="#fff" font-size="15.4" text-anchor="middle" textLength="25.9" lengthAdjust="spacingAndGlyphs" >112</text>
<text x="1447.20" y="605.86" fill="#fff" font-size="15.4" text-anchor="middle" textLength="25.9" lengthAdjust="spacingAndGlyphs" >127</text>
<text x="1447.20" y="622.78" fill="#fff" font-size="15.4" text-anchor="middle" textLength="25.9" lengthAdjust="spacingAndGlyphs" >104</text>
<text x="1447.20" y="639.70" fill="#fff" font-size="15.4" text-anchor="middle" textLength="25.9" lengthAdjust="spacingAndGlyphs" >109</text>
<text x="1447.20" y="656.63" fill="#fff" font-size="15.4" text-anchor="middle" textLength="25.9" lengthAdjust="spacingAndGlyphs" >105</text>
<text x="1447.20" y="673.55" fill="#fff" font-size="15.4" text-anchor="middle" textLength="25.9" lengthAdjust="spacingAndGlyphs" >157</text>
<text x="1447.20" y="690.47" fill="#fff" font-size="15.4" text-anchor="middle" textLength="25.9" lengthAdjust="spacingAndGlyphs" >102</text>
<text x="1447.20" y="707.40" fill="#fff" font-size="15.4" text-anchor="middle" textLength="25.9" lengthAdjust="spacingAndGlyphs" >121</text>
<text x="1447.20" y="724.32" fill="#fff" font-size="15.4" text-anchor="middle" textLength="25.9" lengthAdjust="spacingAndGlyphs" >134</text>
<text x="1447.20" y="741.24" fill="#fff" font-size="15.4" text-anchor="middle" textLength="25.9" lengthAdjust="spacingAndGlyphs" >139</text>
<text x="1447.20" y="758.17" fill="#fff" font-size="15.4" text-anchor="middle" textLength="25.9" lengthAdjust="spacingAndGlyphs" >136</text>
<text x="1447.20" y="775.09" fill="#fff" font-size="15.4" text-anchor="middle" textLength="25.9" lengthAdjust="spacingAndGlyphs" >149</text>
<text x="1447.20" y="792.01" fill="#fff" font-size="15.4" text-anchor="middle" textLength="25.9" lengthAdjust="spacingAndGlyphs" >176</text>
<text x="1447.20" y="808.93" fill="#fff" font-size="15.4" text-anchor="middle" textLength="25.9" lengthAdjust="spacingAndGlyphs" >215</text>
<text x="1447.20" y="825.86" fill="#fff" font-size="15.4" text-anchor="middle" textLength="25.9" lengthAdjust="spacingAndGlyphs" >215</text>
<text x="1447.20" y="842.78" fill="#fff" font-size="15.4" text-anchor="middle" textLength="25.9" lengthAdjust="spacingAndGlyphs" >165</text>
<text x="1447.20" y="859.70" fill="#fff" font-size="15.4" text-anchor="middle" textLength="25.9" lengthAdjust="spacingAndGlyphs" >147</text>
<text x="1447.20" y="876.63" fill="#fff" font-size="15.4" text-anchor="middle" textLength="25.9" lengthAdjust="spacingAndGlyphs" >184</text>
<text x="1447.20" y="893.55" fill="#fff" font-size="15.4" text-anchor="middle" textLength="25.9" lengthAdjust="spacingAndGlyphs" >139</text>
<text x="1447.20" y="910.47" fill="#fff" font-size="15.4" text-anchor="middle" textLength="25.9" lengthAdjust="spacingAndGlyphs" >158</text>
<text x="1447.20" y="927.40" fill="#fff" font-size="15.4" text-anchor="middle" textLength="25.9" lengthAdjust="spacingAndGlyphs" >156</text>
<text x="1447.20" y="944.32" fill="#fff" font-size="15.4" text-anchor="middle" textLength="25.9" lengthAdjust="spacingAndGlyphs" >141</text>
<text x="1447.20" y="961.24" fill="#fff" font-size="15.4" text-anchor="middle" textLength="25.9" lengthAdjust="spacingAndGlyphs" >154</text>
<text x="1447.20" y="978.16" fill="#fff" font-size="15.4" text-anchor="middle" textLength="25.9" lengthAdjust="spacingAndGlyphs" >193</text>
<text x="1447.20" y="995.09" fill="#fff" font-size="15.4" text-anchor="middle" textLength="25.9" lengthAdjust="spacingAndGlyphs" >113</text>
<text x="1447.20" y="1012.01" fill="#fff" font-size="15.4" text-anchor="middle" textLength="25.9" lengthAdjust="spacingAndGlyphs" >129</text>
<text x="1447.20" y="1028.93" fill="#fff" font-size="15.4" text-anchor="middle" textLength="17.2" lengthAdjust="spacingAndGlyphs" >54</text>
<text x="1230.30" y="961.24" fill="#fff" font-size="15.4" text-anchor="end" textLength="17.2" lengthAdjust="spacingAndGlyphs" >10</text>
<text x="1230.30" y="978.16" fill="#fff" font-size="15.4" text-anchor="end" textLength="17.2" lengthAdjust="spacingAndGlyphs" >23</text>
<text x="1230.30" y="995.09" fill="#fff" font-size="15.4" text-anchor="end" textLength="25.9" lengthAdjust="spacingAndGlyphs" >110</text>
<text x="1230.30" y="1012.01" fill="#fff" font-size="15.4" text-anchor="end" textLength="25.9" lengthAdjust="spacingAndGlyphs" >480</text>
<text x="1230.30" y="1028.93" fill="#fff" font-size="15.4" text-anchor="end" textLength="25.9" lengthAdjust="spacingAndGlyphs" >777</text>
<text x="1230.30" y="1045.86" fill="#fff" font-size="15.4" text-anchor="end" textLength="34.5" lengthAdjust="spacingAndGlyphs" >1287</text>
<text x="1242.80" y="944.32" fill="#fff" font-size="15.4" text-anchor="start" textLength="25.9" lengthAdjust="spacingAndGlyphs" >144</text>
<text x="1242.80" y="961.24" fill="#fff" font-size="15.4" text-anchor="start" textLength="25.9" lengthAdjust="spacingAndGlyphs" >157</text>
<text x="1242.80" y="978.16" fill="#fff" font-size="15.4" text-anchor="start" textLength="25.9" lengthAdjust="spacingAndGlyphs" >191</text>
<text x="1242.80" y="995.09" fill="#fff" font-size="15.4" text-anchor="start" textLength="25.9" lengthAdjust="spacingAndGlyphs" >250</text>
<text x="1242.80" y="1012.01" fill="#fff" font-size="15.4" text-anchor="start" textLength="25.9" lengthAdjust="spacingAndGlyphs" >846</text>
<text x="1242.80" y="1028.93" fill="#fff" font-size="15.4" text-anchor="start" textLength="34.5" lengthAdjust="spacingAndGlyphs" >1174</text>
<text x="1242.80" y="1045.86" fill="#fff" font-size="15.4" text-anchor="start" textLength="34.5" lengthAdjust="spacingAndGlyphs" >1127</text>
<text x="1310.30" y="1045.86" fill="#fff" font-size="15.4" text-anchor="middle" textLength="25.9" lengthAdjust="spacingAndGlyphs" >113</text>
<rect x="1334.80" y="1011.00" width="43.40" height="22.00" fill="#80ff00" />
<text x="1355.50" y="1028.93" fill="#ff0000" font-size="15.4" text-anchor="middle" >5</text>
<text x="1355.50" y="1045.86" fill="#ff0000" font-size="15.4" text-anchor="middle" >2</text>
<text x="1402.30" y="961.24" fill="#00e000" font-size="15.4" text-anchor="middle" textLength="17.2" lengthAdjust="spacingAndGlyphs" >10</text>
<text x="1402.30" y="978.16" fill="#00e000" font-size="15.4" text-anchor="middle" textLength="17.2" lengthAdjust="spacingAndGlyphs" >11</text>
<text x="1402.30" y="995.09" fill="#00e000" font-size="15.4" text-anchor="middle" textLength="8.6" lengthAdjust="spacingAndGlyphs" >2</text>
<text x="1402.30" y="1012.01" fill="#00e000" font-size="15.4" text-anchor="middle" textLength="8.6" lengthAdjust="spacingAndGlyphs" >2</text>
<text x="1402.30" y="1028.93" fill="#00e000" font-size="15.4" text-anchor="middle" textLength="8.6" lengthAdjust="spacingAndGlyphs" >6</text>
<rect x="8.00" y="4.00" width="132.50" height="21.00" fill="#c0c0c0" />
<rect x="8.00" y="25.00" width="102.00" height="21.00" fill="#c0c0c0" />
<text x="10.00" y="21.00" fill="#fff" font-size="15.2" text-anchor="start" textLength="125.5" lengthAdjust="spacingAndGlyphs" >Trade: 1@3918.25</text>
<text x="10.00" y="42.00" fill="#fff" font-size="15.2" text-anchor="start" textLength="98.5" lengthAdjust="spacingAndGlyphs" >NPL: 0.00C, 0T</text>
<text x="143.00" y="21.00" fill="#fff" font-size="15.2" text-anchor="start" textLength="139.5" lengthAdjust="spacingAndGlyphs" >ESH1-CME [CBV][M]</text>
<text x="293.50" y="21.00" fill="#fff" font-size="15.2" text-anchor="start" textLength="38.0" lengthAdjust="spacingAndGlyphs" >1 Min</text>
<text x="344.50" y="21.00" fill="#fff" font-size="15.2" text-anchor="start" textLength="17.0" lengthAdjust="spacingAndGlyphs" >#4</text>
<rect x="364.40" y="4.00" width="76.00" height="21.00" fill="#fff" />
<text x="367.00" y="21.00" fill="#000" font-size="15.2" text-anchor="start" textLength="72.0" lengthAdjust="spacingAndGlyphs" >C: 3906.75</text>
<text x="444.70" y="21.00" fill="#fff" font-size="15.2" text-anchor="start" textLength="41.0" lengthAdjust="spacingAndGlyphs" >T: 216</text>
<rect x="488.80" y="4.00" width="66.80" height="21.00" fill="#00c000" />
<text x="490.50" y="21.00" fill="#000" font-size="15.2" text-anchor="start" textLength="63.5" lengthAdjust="spacingAndGlyphs" >Chg: 0.25</text>
<rect x="557.70" y="4.00" width="87.50" height="21.00" fill="#00c000" />
<text x="559.50" y="21.00" fill="#000" font-size="15.2" text-anchor="start" textLength="84.0" lengthAdjust="spacingAndGlyphs" >DChg: 97.50</text>
<g clip-path="url(#cpC)">
<text x="648.40" y="21.00" fill="#fff" font-size="15.2" text-anchor="start" textLength="82.5" lengthAdjust="spacingAndGlyphs" >2021-03-01</text>
<text x="736.80" y="21.00" fill="#fff" font-size="15.2" text-anchor="start" textLength="58.3" lengthAdjust="spacingAndGlyphs" >20:15:06</text>
<text x="801.00" y="21.00" fill="#fff" font-size="15.2" text-anchor="start" textLength="14.5" lengthAdjust="spacingAndGlyphs" >H:</text>
<text x="818.20" y="21.00" fill="#fff" font-size="15.2" text-anchor="start" textLength="55.6" lengthAdjust="spacingAndGlyphs" >3906.75</text>
<text x="880.30" y="21.00" fill="#fff" font-size="15.2" text-anchor="start" textLength="10.8" lengthAdjust="spacingAndGlyphs" >L:</text>
<text x="894.30" y="21.00" fill="#fff" font-size="15.2" text-anchor="start" textLength="55.6" lengthAdjust="spacingAndGlyphs" >3906.25</text>
<text x="955.50" y="21.00" fill="#fff" font-size="15.2" text-anchor="start" textLength="15.2" lengthAdjust="spacingAndGlyphs" >O:</text>
<text x="974.40" y="21.00" fill="#fff" font-size="15.2" text-anchor="start" textLength="55.6" lengthAdjust="spacingAndGlyphs" >3906.25</text>
</g>
<rect x="37.00" y="127.00" width="120.00" height="37.00" fill="#7ffcfc" />
<text x="38.70" y="156.70" fill="#000" font-size="26" text-anchor="start" textLength="99.0" lengthAdjust="spacingAndGlyphs" font-weight="bold">S&amp;P500</text>
<text x="10.90" y="1066.30" fill="#fff" font-size="15.2" text-anchor="start" textLength="179.5" lengthAdjust="spacingAndGlyphs" >BidVolume vs. AskVolume</text>
<text x="199.60" y="1066.30" fill="#00e000" font-size="15.2" text-anchor="start" textLength="115.7" lengthAdjust="spacingAndGlyphs" >Ask Volume: 280</text>
<text x="325.00" y="1066.30" fill="#ff0000" font-size="15.2" text-anchor="start" textLength="112.6" lengthAdjust="spacingAndGlyphs" >Bid Volume: 323</text>
<text x="450.00" y="1066.30" fill="#fff" font-size="15.2" text-anchor="start" textLength="90.0" lengthAdjust="spacingAndGlyphs" >(No, Yes, No)</text>
<rect x="12.00" y="1176.20" width="8.20" height="8.30" fill="#00ff00" />
<rect x="14.00" y="1172.00" width="4.20" height="12.50" fill="#ff0000" />
<rect x="27.00" y="1169.10" width="8.20" height="15.40" fill="#00ff00" />
<rect x="29.00" y="1168.00" width="4.20" height="16.50" fill="#ff0000" />
<rect x="42.00" y="1180.20" width="8.20" height="4.30" fill="#00ff00" />
<rect x="44.00" y="1179.30" width="4.20" height="5.20" fill="#ff0000" />
<rect x="57.00" y="1179.30" width="8.20" height="5.20" fill="#00ff00" />
<rect x="59.00" y="1175.10" width="4.20" height="9.40" fill="#ff0000" />
<rect x="72.00" y="1179.30" width="8.20" height="5.20" fill="#00ff00" />
<rect x="74.00" y="1180.20" width="4.20" height="4.30" fill="#ff0000" />
<rect x="87.00" y="1177.40" width="8.20" height="7.10" fill="#00ff00" />
<rect x="89.00" y="1177.40" width="4.20" height="7.10" fill="#ff0000" />
<rect x="102.00" y="1169.10" width="8.20" height="15.40" fill="#00ff00" />
<rect x="104.00" y="1167.30" width="4.20" height="17.20" fill="#ff0000" />
<rect x="117.00" y="1179.30" width="8.20" height="5.20" fill="#00ff00" />
<rect x="119.00" y="1179.30" width="4.20" height="5.20" fill="#ff0000" />
<rect x="132.00" y="1143.20" width="8.20" height="41.30" fill="#00ff00" />
<rect x="134.00" y="1162.10" width="4.20" height="22.40" fill="#ff0000" />
<rect x="147.00" y="1174.10" width="8.20" height="10.40" fill="#00ff00" />
<rect x="149.00" y="1161.40" width="4.20" height="23.10" fill="#ff0000" />
<rect x="162.00" y="1169.10" width="8.20" height="15.40" fill="#00ff00" />
<rect x="164.00" y="1165.10" width="4.20" height="19.40" fill="#ff0000" />
<rect x="177.00" y="1166.30" width="8.20" height="18.20" fill="#00ff00" />
<rect x="179.00" y="1167.30" width="4.20" height="17.20" fill="#ff0000" />
<rect x="192.00" y="1176.20" width="8.20" height="8.30" fill="#00ff00" />
<rect x="194.00" y="1176.70" width="4.20" height="7.80" fill="#ff0000" />
<rect x="207.00" y="1150.30" width="8.20" height="34.20" fill="#00ff00" />
<rect x="209.00" y="1166.30" width="4.20" height="18.20" fill="#ff0000" />
<rect x="222.00" y="1115.30" width="8.20" height="69.20" fill="#00ff00" />
<rect x="224.00" y="1140.10" width="4.20" height="44.40" fill="#ff0000" />
<rect x="237.00" y="1089.30" width="8.20" height="95.20" fill="#00ff00" />
<rect x="239.00" y="1071.10" width="4.20" height="113.40" fill="#ff0000" />
<rect x="252.00" y="1144.30" width="8.20" height="40.20" fill="#00ff00" />
<rect x="254.00" y="1145.30" width="4.20" height="39.20" fill="#ff0000" />
<rect x="267.00" y="1172.20" width="8.20" height="12.30" fill="#00ff00" />
<rect x="269.00" y="1175.10" width="4.20" height="9.40" fill="#ff0000" />
<rect x="282.00" y="1171.30" width="8.20" height="13.20" fill="#00ff00" />
<rect x="284.00" y="1172.20" width="4.20" height="12.30" fill="#ff0000" />
<rect x="297.00" y="1143.20" width="8.20" height="41.30" fill="#00ff00" />
<rect x="299.00" y="1159.20" width="4.20" height="25.30" fill="#ff0000" />
<rect x="312.00" y="1166.30" width="8.20" height="18.20" fill="#00ff00" />
<rect x="314.00" y="1164.40" width="4.20" height="20.10" fill="#ff0000" />
<rect x="327.00" y="1181.20" width="8.20" height="3.30" fill="#00ff00" />
<rect x="329.00" y="1180.20" width="4.20" height="4.30" fill="#ff0000" />
<line x1="6.00" y1="1185.40" x2="989.80" y2="1185.40" stroke="#fff" stroke-width="1.6" />
<line x1="16.00" y1="1185.00" x2="16.00" y2="1189.50" stroke="#fff" stroke-width="1.3" />
<line x1="91.30" y1="1185.00" x2="91.30" y2="1189.50" stroke="#fff" stroke-width="1.3" />
<line x1="151.30" y1="1185.00" x2="151.30" y2="1189.50" stroke="#fff" stroke-width="1.3" />
<line x1="211.30" y1="1185.00" x2="211.30" y2="1189.50" stroke="#fff" stroke-width="1.3" />
<line x1="271.30" y1="1185.00" x2="271.30" y2="1189.50" stroke="#fff" stroke-width="1.3" />
<line x1="331.30" y1="1185.00" x2="331.30" y2="1189.50" stroke="#fff" stroke-width="1.3" />
<line x1="391.30" y1="1185.00" x2="391.30" y2="1189.50" stroke="#fff" stroke-width="1.3" />
<line x1="451.30" y1="1185.00" x2="451.30" y2="1189.50" stroke="#fff" stroke-width="1.3" />
<line x1="511.30" y1="1185.00" x2="511.30" y2="1189.50" stroke="#fff" stroke-width="1.3" />
<line x1="571.30" y1="1185.00" x2="571.30" y2="1189.50" stroke="#fff" stroke-width="1.3" />
<line x1="631.30" y1="1185.00" x2="631.30" y2="1189.50" stroke="#fff" stroke-width="1.3" />
<line x1="691.30" y1="1185.00" x2="691.30" y2="1189.50" stroke="#fff" stroke-width="1.3" />
<line x1="751.30" y1="1185.00" x2="751.30" y2="1189.50" stroke="#fff" stroke-width="1.3" />
<line x1="811.30" y1="1185.00" x2="811.30" y2="1189.50" stroke="#fff" stroke-width="1.3" />
<line x1="871.30" y1="1185.00" x2="871.30" y2="1189.50" stroke="#fff" stroke-width="1.3" />
<line x1="931.30" y1="1185.00" x2="931.30" y2="1189.50" stroke="#fff" stroke-width="1.3" />
<text x="91.30" y="1206.30" fill="#fff" font-size="15.2" text-anchor="middle" textLength="37.0" lengthAdjust="spacingAndGlyphs" >19:59</text>
<text x="151.30" y="1206.30" fill="#fff" font-size="15.2" text-anchor="middle" textLength="37.0" lengthAdjust="spacingAndGlyphs" >20:03</text>
<text x="211.30" y="1206.30" fill="#fff" font-size="15.2" text-anchor="middle" textLength="37.0" lengthAdjust="spacingAndGlyphs" >20:07</text>
<text x="271.30" y="1206.30" fill="#fff" font-size="15.2" text-anchor="middle" textLength="37.0" lengthAdjust="spacingAndGlyphs" >20:11</text>
<text x="331.30" y="1206.30" fill="#fff" font-size="15.2" text-anchor="middle" textLength="37.0" lengthAdjust="spacingAndGlyphs" >20:15</text>
<text x="391.30" y="1206.30" fill="#fff" font-size="15.2" text-anchor="middle" textLength="37.0" lengthAdjust="spacingAndGlyphs" >20:19</text>
<text x="451.30" y="1206.30" fill="#fff" font-size="15.2" text-anchor="middle" textLength="37.0" lengthAdjust="spacingAndGlyphs" >20:23</text>
<text x="511.30" y="1206.30" fill="#fff" font-size="15.2" text-anchor="middle" textLength="37.0" lengthAdjust="spacingAndGlyphs" >20:27</text>
<text x="571.30" y="1206.30" fill="#fff" font-size="15.2" text-anchor="middle" textLength="37.0" lengthAdjust="spacingAndGlyphs" >20:31</text>
<text x="631.30" y="1206.30" fill="#fff" font-size="15.2" text-anchor="middle" textLength="37.0" lengthAdjust="spacingAndGlyphs" >20:35</text>
<text x="691.30" y="1206.30" fill="#fff" font-size="15.2" text-anchor="middle" textLength="37.0" lengthAdjust="spacingAndGlyphs" >20:39</text>
<text x="751.30" y="1206.30" fill="#fff" font-size="15.2" text-anchor="middle" textLength="37.0" lengthAdjust="spacingAndGlyphs" >20:43</text>
<text x="811.30" y="1206.30" fill="#fff" font-size="15.2" text-anchor="middle" textLength="37.0" lengthAdjust="spacingAndGlyphs" >20:47</text>
<text x="871.30" y="1206.30" fill="#fff" font-size="15.2" text-anchor="middle" textLength="37.0" lengthAdjust="spacingAndGlyphs" >20:51</text>
<text x="931.30" y="1206.30" fill="#fff" font-size="15.2" text-anchor="middle" textLength="37.0" lengthAdjust="spacingAndGlyphs" >20:55</text>
<rect x="6.00" y="1188.30" width="44.00" height="22.20" fill="#fff" />
<g clip-path="url(#cpD)">
<text x="48.60" y="1206.30" fill="#000" font-size="15.2" text-anchor="end" textLength="61.0" lengthAdjust="spacingAndGlyphs" >2021-3-1</text>
</g>
<line x1="989.00" y1="1071.70" x2="992.50" y2="1071.70" stroke="#fff" stroke-width="1.2" />
<line x1="989.00" y1="1128.00" x2="992.50" y2="1128.00" stroke="#fff" stroke-width="1.2" />
<text x="994.20" y="1078.30" fill="#fff" font-size="15.2" text-anchor="start" textLength="35.2" lengthAdjust="spacingAndGlyphs" >8000</text>
<text x="994.20" y="1134.80" fill="#fff" font-size="15.2" text-anchor="start" textLength="35.2" lengthAdjust="spacingAndGlyphs" >4000</text>
<rect x="1432.00" y="1189.00" width="39.50" height="21.50" fill="#00c000" />
<text x="1451.50" y="1206.30" fill="#fff" font-size="15.2" text-anchor="middle" textLength="29.0" lengthAdjust="spacingAndGlyphs" >14 L</text>
</svg>

<div class="abs" style="left:0;top:0;width:1482px;height:2px;background:#d7e4f2"></div>
<div class="abs" style="left:0;top:2px;width:1474px;height:1px;background:#696969"></div>
<div class="abs" style="left:0;top:3px;width:1474px;height:1px;background:#a0a0a0"></div>
<div class="abs" style="left:0;top:4px;width:6px;height:1207px;background:#fff"></div>
<div class="abs" style="left:0;top:30px;width:4.8px;height:17.7px;background:#4dcc4d"></div>
<div class="abs" style="left:0;top:54px;width:1.3px;height:388.7px;background:#a4a4a4"></div>
<div class="abs" style="left:1.3px;top:54px;width:0.8px;height:388.7px;background:#696969"></div>
<div class="abs" style="left:0;top:72.8px;width:3px;height:2.4px;background:#fff"></div>
<div class="abs" style="left:1472.1px;top:2px;width:2.2px;height:1226px;background:#fff"></div>
<div class="abs" style="left:1474px;top:0;width:8px;height:1243px;background:#d7e4f2"></div>
<div class="abs" style="left:0;top:1210.5px;width:1472px;height:18px;background:#f0f0f0"></div>
<div class="abs" style="left:1437.7px;top:1212px;width:17.5px;height:15px;background:#cdcdcd"></div>
<svg class="abs" style="left:1460px;top:1215px" width="7" height="10" viewBox="0 0 7 10"><path d="M1 1 L5.5 5 L1 9" stroke="#505050" stroke-width="1.5" fill="none"/></svg>
<div class="abs" style="left:0;top:1228.5px;width:1482px;height:8.5px;background:#dfe9f5"></div>
<div class="abs" style="left:0;top:1237px;width:1482px;height:1.5px;background:#7a7a7a"></div>
<div class="abs" style="left:0;top:1238.5px;width:1482px;height:4.5px;background:#e4e4e4"></div>
<div class="abs" style="left:160px;top:1238px;width:158px;height:3px;background:#f4f4f4;border:1px solid #8a8a8a;border-top:none"></div>

<div id="dlg">
<div class="tb"></div><div class="tt">Customize Chart DOM Columns</div>
<svg class="abs" style="left:719.3px;top:8.200000000000003px" width="12" height="12" viewBox="0 0 12 12"><path d="M0.7 0.7 L11.3 11.3 M11.3 0.7 L0.7 11.3" stroke="#666" stroke-width="1" fill="none"/></svg>
<div class="lbl" style="left:14.199999999999989px;top:44px">Hidden Columns:</div>
<div class="lb" style="left:14.199999999999989px;top:64px;width:252.8px;height:238.5px">
 <div style="position:absolute;left:0;top:2px;width:236.3px;overflow:hidden"><div class="it">Buy Order Column</div><div class="it">Sell Order Column</div><div class="it">Bid Size</div><div class="it">Ask Size</div><div class="it">Combined Bid/Ask Size</div><div class="it">Last Size</div><div class="it">Current Traded Total Volume</div><div class="it">Bid Market Depth Pulling/Stacking</div><div class="it">Ask Market Depth Pulling/Stacking</div><div class="it">Combined Bid/Ask Market Depth Pulling/Stacking</div><div class="it">Profit &amp; Loss</div><div class="it">Label Column</div><div class="it">Bid Number of Orders</div><div class="it">Ask Number of Orders</div><div class="it">Combined Bid/Ask Number of Orders</div></div>
 <div style="position:absolute;right:1px;top:1px;width:15px;bottom:1px;background:#f0f0f0">
  <div style="position:absolute;left:0;top:17px;width:15px;height:150px;background:#cdcdcd"></div>
  <svg class="abs" style="left:3.2px;top:6px" width="9" height="6" viewBox="0 0 9 6"><path d="M0.9 5 L4.5 1.4 L8.1 5" stroke="#505050" stroke-width="1.9" fill="none"/></svg>
  <svg class="abs" style="left:3.2px;bottom:6px" width="9" height="6" viewBox="0 0 9 6"><path d="M0.9 1 L4.5 4.6 L8.1 1" stroke="#505050" stroke-width="1.9" fill="none"/></svg>
 </div>
</div>
<div class="btn" style="left:278.2px;top:140.2px;width:31.5px;height:27.6px;line-height:25.400000000000002px;color:#888">-&gt;</div>
<div class="btn" style="left:278.2px;top:175.9px;width:31.5px;height:27.6px;line-height:25.400000000000002px;color:#000">&lt;-</div>
<div class="lbl" style="left:318.5px;top:44px">Visible Columns:</div>
<div class="lb" style="left:318.5px;top:64px;width:252.0px;height:240.39999999999998px">
 <div style="position:absolute;left:0;top:2px;right:0"><div class="it">Cumulative Last Size</div><div class="it">Price</div><div class="it sel">Combined Bid Ask Market Orders Column</div><div class="it">Current Traded Bid Volume</div><div class="it">Current Traded Ask Volume</div><div class="it">Bid Size/Buy Column</div><div class="it">Recent Ask Volume</div><div class="it">Recent Bid Volume</div><div class="it">Ask Size/Sell Column</div></div>
</div>
<div class="lbl" style="left:582.4px;top:65.2px">Custom Title:</div>
<div class="lb" style="left:582.4px;top:86.3px;width:140.39999999999998px;height:18.299999999999997px;border-right-color:#e3e3e3;border-bottom-color:#e3e3e3"><div class="lbl" style="left:1.5px;top:0.3px">MBO</div></div>
<div class="lbl" style="left:582.4px;top:116.6px">Alignment:</div>
<div class="lb" style="left:582.4px;top:136.2px;width:140.0px;height:20.80000000000001px;border-right-color:#e3e3e3;border-bottom-color:#e3e3e3"><div class="lbl" style="left:2.5px;top:3px">Center</div>
 <div class="btn" style="right:1px;top:1px;width:17px;height:18.8px"><svg class="abs" style="left:4px;top:7px" width="7" height="4" viewBox="0 0 7 4"><path d="M0 0 L7 0 L3.5 4 Z" fill="#000"/></svg></div>
</div>
<div class="cb" style="left:582.4px;top:171.4px;background:#f0f0f0"><svg class="abs" style="left:1px;top:1px" width="9" height="9" viewBox="0 0 9 9"><path d="M1 3 L3.1 5.1 L7.6 0.6 L7.6 3.6 L3.1 8.1 L1 6 Z" fill="#a0a0a0"/></svg></div><div class="lbl" style="left:600.6px;top:170.2px;color:#a0a0a0;text-shadow:1px 1px 0 #fff;letter-spacing:-0.15px">Automatic Sizing</div>
<div class="cb" style="left:582.4px;top:191.6px;background:#f0f0f0"></div><div class="lbl" style="left:600.6px;top:190.4px;color:#a0a0a0;text-shadow:1px 1px 0 #fff">Show Volume Bars</div>
<div class="cb" style="left:582.4px;top:211.3px;background:#fff"><svg class="abs" style="left:1px;top:1px" width="9" height="9" viewBox="0 0 9 9"><path d="M1 3 L3.1 5.1 L7.6 0.6 L7.6 3.6 L3.1 8.1 L1 6 Z" fill="#000"/></svg></div><div class="lbl" style="left:600.6px;top:210px;letter-spacing:-0.15px">Use Size Suffix</div>
<div class="btn" style="left:582.4px;top:244.3px;width:144px;height:27.2px;line-height:25.0px;color:#000">Move Up/Left</div>
<div class="btn" style="left:582.4px;top:280.6px;width:144px;height:27.2px;line-height:25.0px;color:#000">Move Down/Right</div>
<div class="cb" style="left:14.5px;top:331px;background:#fff"><svg class="abs" style="left:1px;top:1px" width="9" height="9" viewBox="0 0 9 9"><path d="M1 3 L3.1 5.1 L7.6 0.6 L7.6 3.6 L3.1 8.1 L1 6 Z" fill="#000"/></svg></div><div class="lbl" style="left:32.099999999999994px;top:329.2px;word-spacing:-0.75px">Show Market Data Column Vertical Lines (Global Setting, Chart DOM)</div>
<div class="btn" style="left:14.199999999999989px;top:364.4px;width:99.6px;height:27.2px;line-height:25.0px;color:#000">Use Defaults</div>
<div class="btn" style="left:402.20000000000005px;top:364.4px;width:99.8px;height:27.2px;line-height:25.0px;color:#000">OK</div>
<div class="btn" style="left:514px;top:364.4px;width:99.8px;height:27.2px;line-height:25.0px;color:#000">Apply</div>
<div class="btn" style="left:626px;top:364.4px;width:100.3px;height:27.2px;line-height:25.0px;color:#000">Cancel</div>
</div>
<svg class="abs" style="left:0;top:0" width="1482" height="1243" viewBox="0 0 1482 1243">
<rect x="428.5" y="111.5" width="425" height="33.9" rx="1.2" fill="none" stroke="#ff0000" stroke-width="3"/>
<path d="M1112.7 0 L1112.7 985.3 L1188.6 985.3 L1188.6 0" fill="none" stroke="#ff0000" stroke-width="3"/>
</svg>
</body></html>
